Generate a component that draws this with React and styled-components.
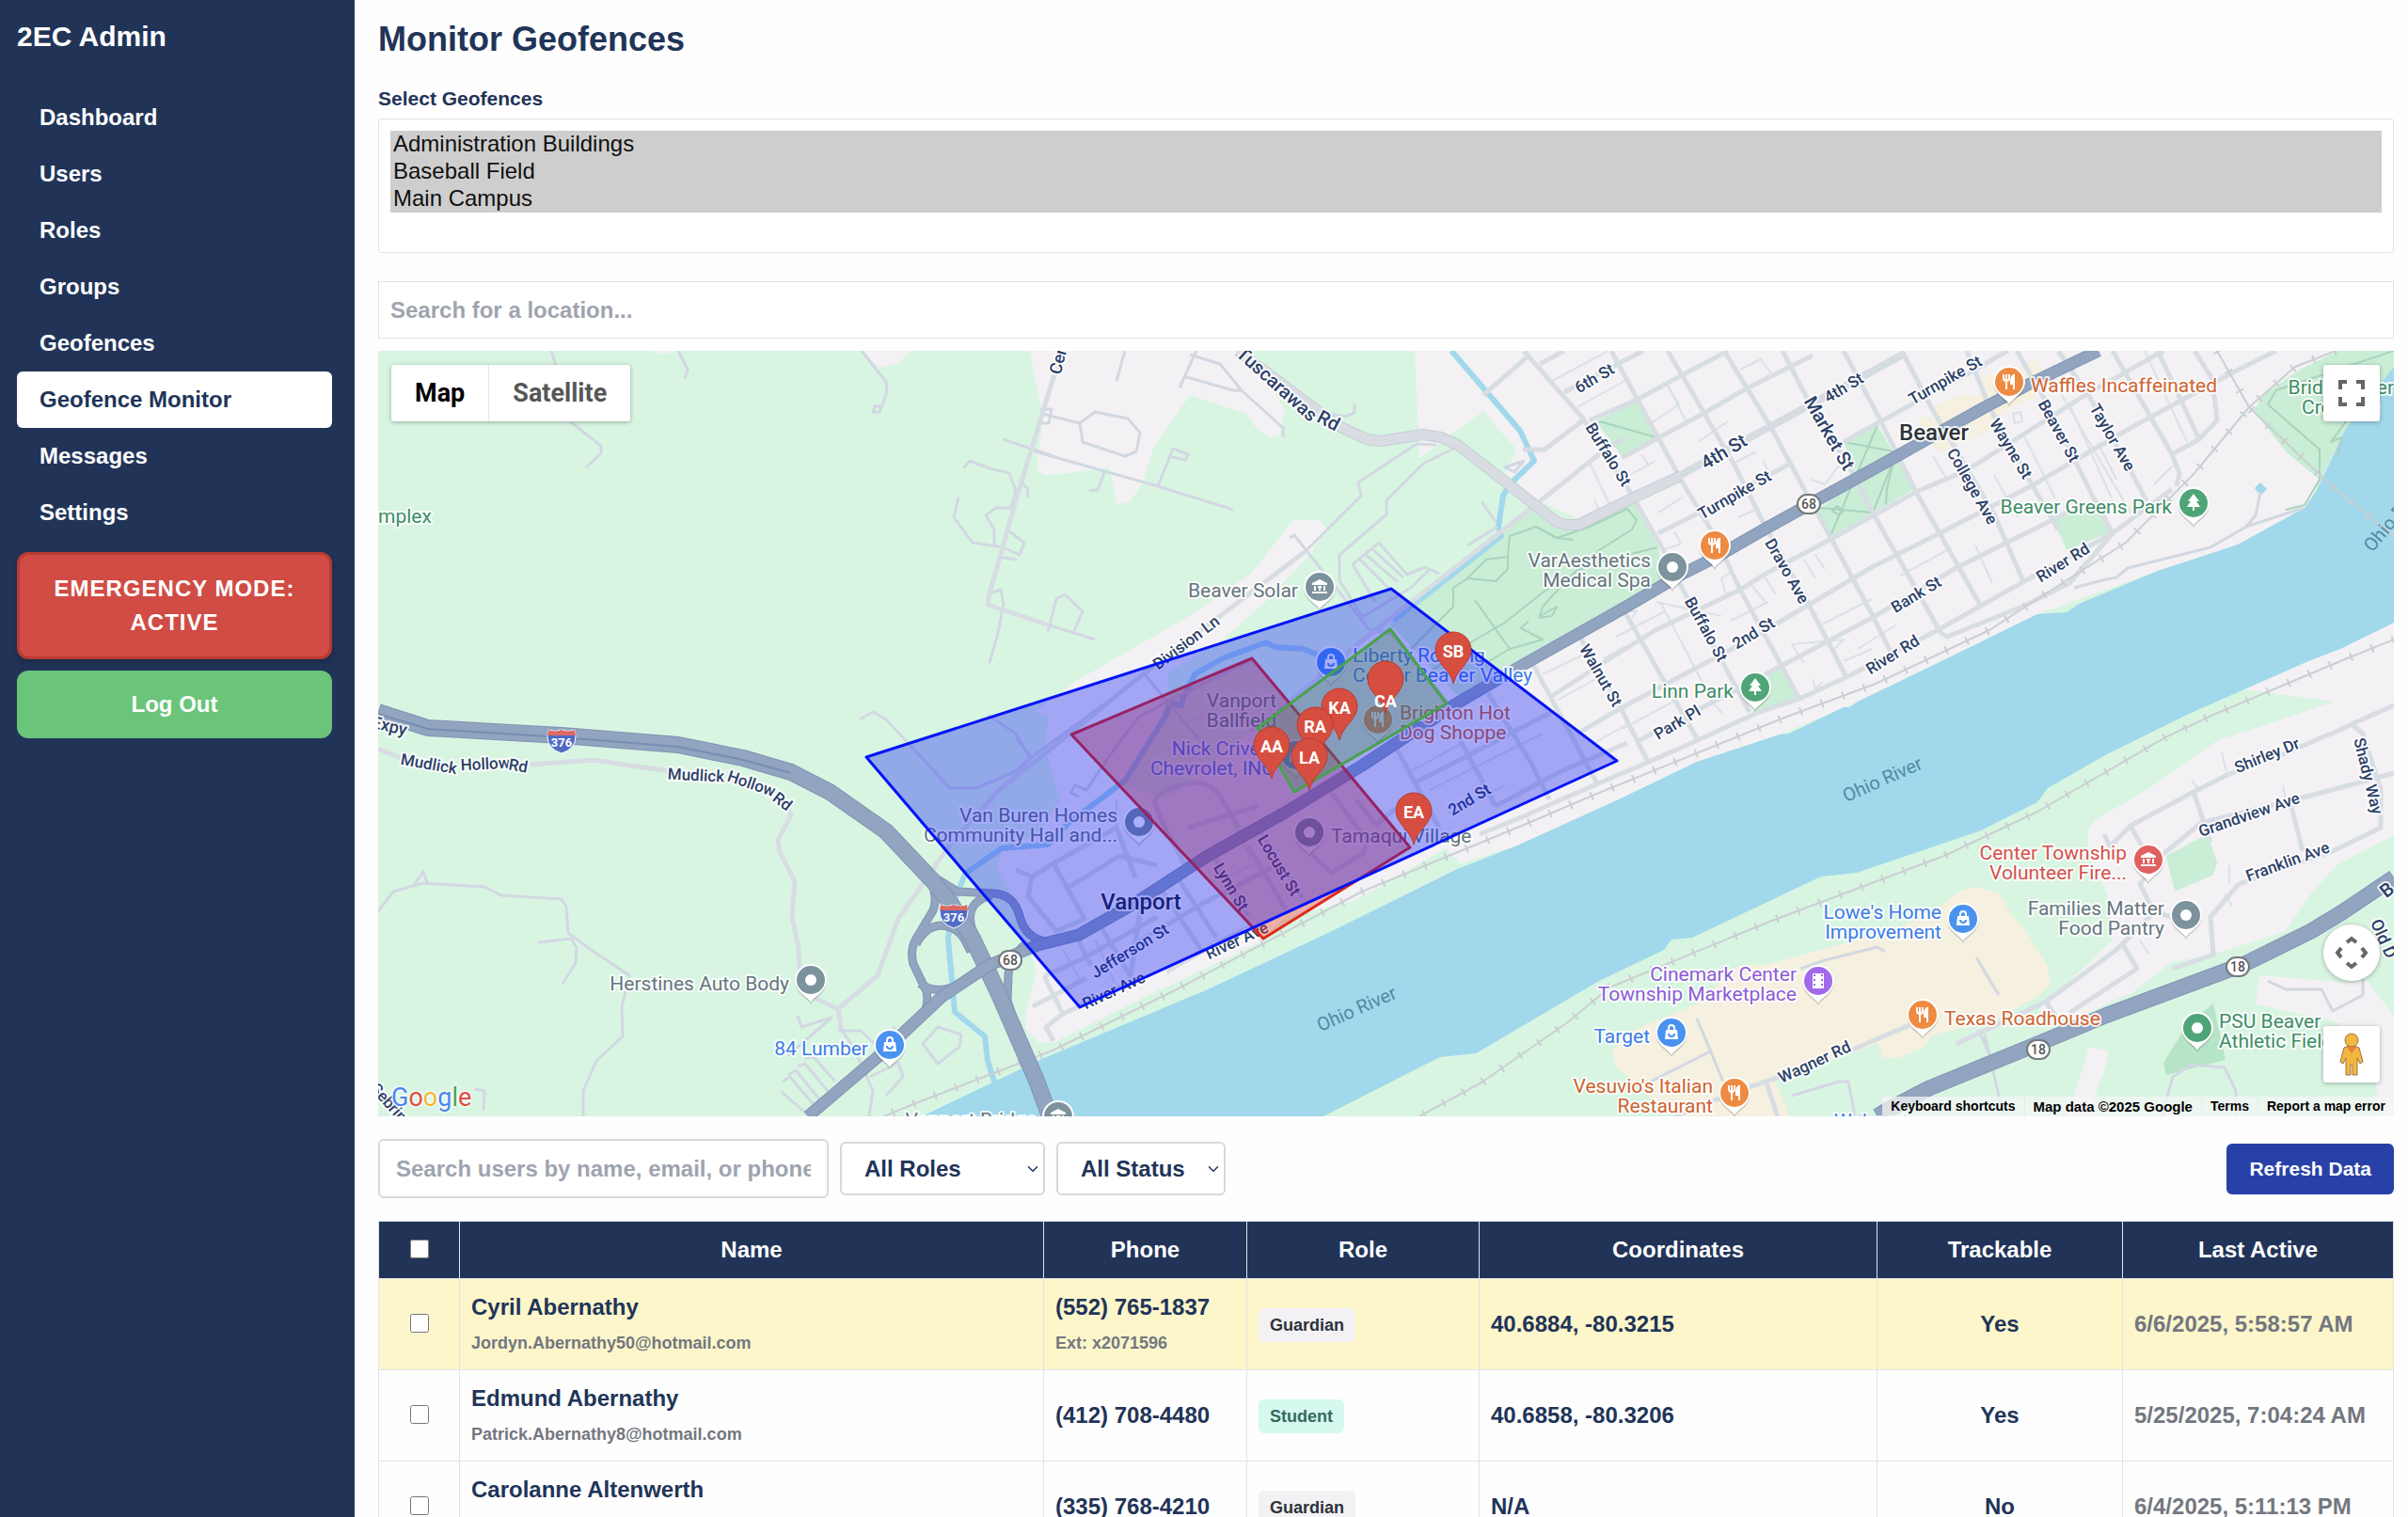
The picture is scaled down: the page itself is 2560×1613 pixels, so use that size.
import React from "react";
import styled, {createGlobalStyle} from "styled-components";
import {ChevronDown} from "lucide-react";

const GlobalStyle = createGlobalStyle`
    *, *::before, *::after {
        box-sizing: border-box;
    }
    body {
        margin: 0;
        background: #fefefe;
        color: #213458;
        font-family: "Liberation Sans", Arial, sans-serif;
        font-size: 24px;
        font-weight: bold;
        line-height: 36px;
    }
    button, input, select {
        font: inherit;
        color: inherit;
    }
`;

/* ---------- page shell ---------- */

const Shell = styled.div`
    display: flex;
    height: 100vh;
    overflow: hidden;
`;

const Sidebar = styled.aside`
    flex: 0 0 377px;
    padding: 18px 24px 18px 18px;
    background: #213458;
    color: #fff;
`;

const Brand = styled.div`
    margin-bottom: 35px;
    font-size: 30px;
    line-height: 42px;
`;

const Nav = styled.nav`
    display: flex;
    flex-direction: column;
    margin-bottom: 12px;
`;

const NavLink = styled.a`
    padding: 12px 24px;
    border-radius: 6px;
    text-decoration: none;
    color: ${(p) => (p.$active ? "#213458" : "#fff")};
    background: ${(p) => (p.$active ? "#fff" : "transparent")};
`;

const EmergencyButton = styled.button`
    display: block;
    width: 100%;
    margin-bottom: 12px;
    padding: 18px;
    border: 3px solid #b83a33;
    border-radius: 12px;
    background: #d04c44;
    box-shadow: 0 4px 8px rgba(0, 0, 0, 0.2);
    letter-spacing: 1px;
    text-transform: uppercase;
    color: #fff;
`;

const LogoutButton = styled.button`
    display: block;
    width: 100%;
    padding: 18px;
    border: none;
    border-radius: 12px;
    background: #6ac47a;
    color: #fff;
`;

const Main = styled.main`
    flex: 1;
    min-width: 0;
    padding: 18px 15px 0 25px;
`;

const Title = styled.h1`
    margin: 0 0 22px;
    font-size: 36px;
    line-height: 48px;
`;

const FieldLabel = styled.label`
    display: block;
    margin-bottom: 5px;
    font-size: 21px;
    line-height: 33px;
`;

const GeofenceList = styled.select`
    display: block;
    width: 100%;
    height: 143px;
    margin-bottom: 30px;
    padding: 12px;
    border: 1px solid #dfe2e6;
    border-radius: 3px;
    background: #fff;
    color: #000;
    font-weight: normal;
    overflow: hidden;
    option {
        min-height: 29px;
        padding: 0 3px 1px;
    }
`;

const LocationInput = styled.input`
    display: block;
    width: 100%;
    height: 61px;
    margin-bottom: 13px;
    padding: 0 12px;
    border: 1px solid #dfe2e6;
    background: #fff;
    &::placeholder {
        color: #9ea4af;
    }
`;

/* ---------- map ---------- */

const MapFrame = styled.section`
    position: relative;
    height: 814px;
    overflow: hidden;
    font-family: Roboto, sans-serif;
    font-weight: normal;
`;

const MapDrawing = styled.svg`
    display: block;
    width: 100%;
    height: 100%;
`;

const MapTypes = styled.div`
    position: absolute;
    top: 15px;
    left: 14px;
    display: flex;
    border-radius: 3px;
    background: #fff;
    box-shadow: 0 1px 5px rgba(0, 0, 0, 0.3);
`;

const MapTypeButton = styled.button`
    height: 60px;
    padding: 0 25px;
    border: none;
    border-left: ${(p) => (p.$active ? "none" : "1px solid #e6e6e6")};
    background: none;
    font-size: 27px;
    font-weight: 700;
    color: ${(p) => (p.$active ? "#000" : "#565656")};
`;

const MapButton = styled.button`
    position: absolute;
    right: 15px;
    top: ${(p) => p.$top};
    bottom: ${(p) => p.$bottom};
    display: grid;
    place-items: center;
    width: 60px;
    height: 60px;
    padding: 0;
    border: none;
    border-radius: ${(p) => (p.$round ? "50%" : "3px")};
    background: #fff;
    box-shadow: 0 1px 5px rgba(0, 0, 0, 0.3);
`;

const GoogleLogo = styled.div`
    position: absolute;
    left: 14px;
    bottom: 3px;
    font-size: 27px;
    font-weight: 400;
    line-height: 34px;
    text-shadow: 0 0 2px #fff, 0 0 3px #fff, 0 0 4px #fff;
`;

const Letter = styled.span`
    color: ${(p) => p.$color};
`;

const Attribution = styled.div`
    position: absolute;
    right: 0;
    bottom: 0;
    display: flex;
    gap: 1px;
    font-family: "Liberation Sans", Arial, sans-serif;
    font-size: 14px;
    font-weight: bold;
    line-height: 21px;
    color: #000;
    > * {
        padding: 0 9px;
        background: rgba(245, 245, 245, 0.75);
        color: inherit;
        text-decoration: none;
    }
`;

const Copyright = styled.span`
    font-size: 15px;
`;

const NAVY = "#2c4068";
const GRAY = "#66757f";
const BLUE = "#3c7ce8";
const GREEN = "#3f8d66";
const ORANGE = "#cf6430";
const RED = "#d6504c";
const PURPLE = "#8e5cd6";

const URBAN = [
    "M1504 373 L1509 487 L1577 437 L1612 478 L1600 503 L1635 532 L1678 552 L1610 600 L1480 668 L1456 672 L1340 770 L1240 850 L1190 835 L1225 790 L1240 745 L1242 715 L1300 680 L1345 640 L1392 590 L1410 562 L1403 553 L1375 553 L1330 610 L1261 657 L1146 723 L1100 757 L1114 762 L1112 800 L1127 850 L1107 883 L1065 905 L1059 921 L1085 970 L1102 1033 L1090 1080 L1091 1095 L1103 1108 L1120 1109 L1223 1057 L1290 1026 L1339 1002 L1366 975 L1440 958 L1537 902 L1553 918 L1613 899 L1723 849 L1804 810 L1892 781 L1977 745 L2166 653 L2294 607 L2380 579 L2450 540 L2545 390 L2545 373Z",
    "M1095 373 L1100 402 L1109 443 L1102 500 L1112 506 L1180 497 L1187 536 L1201 534 L1215 513 L1226 477 L1265 420 L1325 440 L1334 453 L1350 465 L1360 463 L1366 437 L1332 373Z",
    "M914 373 L935 391 L955 386 L969 373Z",
    "M695 373 L702 377 L720 373Z",
    "M2545 662 L2488 690 L2454 703 L2386 733 L2481 746 L2396 775 L2358 787 L2282 840 L2227 872 L2220 883 L2220 910 L2240 950 L2243 977 L2246 1000 L2166 1075 L2205 1085 L2248 1063 L2265 1057 L2309 1023 L2353 1015 L2430 990 L2457 950 L2484 920 L2545 888Z",
    "M2402 1037 L2500 1045 L2517 1043 L2545 1080 L2545 1187 L2530 1187 L2520 1110 L2480 1085 L2398 1068Z",
    "M2221 1113 L2241 1117 L2240 1130 L2227 1166 L2222 1187 L2198 1187Z",
];

const COMMERCIAL = [
    "M2084 947 L2103 943 L2125 950 L2139 973 L2152 987 L2177 1027 L2180 1047 L2166 1060 L2117 1087 L2056 1100 L2043 1115 L2018 1125 L2002 1125 L1996 1110 L1886 1147 L1903 1187 L1785 1187 L1755 1167 L1717 1133 L1714 1117 L1733 1097 L1804 1067 L1848 1027 L1881 1025 L2007 990 L2051 973Z",
    "M2054 433 L2086 420 L2104 420 L2108 400 L2149 390 L2163 382 L2173 397 L2163 423 L2130 437 L2120 453 L2105 463 L2062 480 L2040 457 L2042 443 L2062 448Z",
];

const PARKS = [
    "M1635 533 L1665 556 L1683 554 L1736 533 L1764 583 L1766 617 L1605 707 L1550 740 L1477 663 L1596 570 L1628 540Z",
    "M1960 470 L1996 452 L2035 520 L1945 572 L1933 542 L1976 510Z",
    "M1697 448 L1740 426 L1761 465 L1724 485Z",
    "M2183 553 L2222 540 L2239 547 L2246 565 L2197 585Z",
    "M1873 723 L1894 710 L1911 742 L1863 758Z",
    "M2486 373 L2545 373 L2545 390 L2527 413 L2493 457 L2478 487 L2463 520 L2466 510 L2430 480 L2396 437 L2406 420 L2445 393Z",
    "M2303 910 L2347 887 L2357 917 L2353 930 L2312 948Z",
];

const RIVER = "M980 1187 L1103 1128 L1284 1052 L1416 990 L1547 925 L1613 899 L1723 849 L1804 810 L1892 781 L1902 780 L1960 752 L1966 752 L1977 745 L2060 705 L2166 653 L2197 651 L2210 642 L2294 607 L2379 579 L2450 540 L2462 523 L2479 487 L2493 457 L2527 413 L2545 390 L2545 662 L2488 690 L2454 703 L2386 733 L2325 760 L2238 803 L2177 838 L2166 853 L2106 883 L1974 928 L1936 932 L1799 997 L1777 999 L1769 1010 L1700 1043 L1569 1120 L1531 1124 L1503 1138 L1407 1187Z";

const STREAMS = [
    "M1543 373 L1616 458 L1631 490 L1607 513 L1598 527 L1593 560 L1596 570 L1481 660",
    "M1402 697 L1386 690 L1356 688 L1346 683 L1300 700 L1270 717 L1258 742 L1256 750 L1244 748 L1240 760 L1196 830 L1136 875 L1114 898 L1065 902 L1026 929 L1012 965 L1008 998 L1015 1076 L1047 1102 L1050 1128 L1057 1150",
];

/* thin country roads and driveways */
const LANES = [
    "M586 373 L592 392", "M607 449 L639 474 L639 482 L623 497", "M721 373 L731 393 L728 403",
    "M916 373 L942 406 L943 417 L935 438 L928 438 L930 432 L937 432",
    "M1066 467 L1120 485", "M1024 498 L1031 490 L1052 498 L1073 503 L1080 522 L1075 540 L1059 540 L1048 548 L1057 563 L1057 581",
    "M1019 529 L1014 550 L1034 577 L1066 582 L1084 590 L1089 577 L1073 565", "M1062 592 L1081 595", "M1086 513 L1093 520 L1092 529",
    "M1052 631 L1064 627 L1067 642 L1061 673 L1052 705",
    "M402 969 L418 948 L450 939 L515 943 L533 952 L597 956 L602 964 L604 992 L630 1011 L669 1037 L661 1071 L662 1102 L634 1128 L620 1160 L620 1187",
    "M440 941 L450 927 L454 938", "M572 1002 L607 998 L613 1007 L612 1024 L598 1046", "M505 1158 L515 1160 L514 1180",
    "M914 765 L928 757 L942 765 L1010 838 L1038 838 L1080 820 L1095 806 L1080 780 L1050 760",
    "M893 1092 L905 1110 L919 1139 L928 1160 L924 1187", "M981 1110 L997 1092 L1022 1100 L1020 1113 L997 1131Z",
    "M848 1080 L852 1092 L884 1082 L838 1122", "M891 1096 L915 1096 L930 1110 L952 1092",
    "M832 1150 L840 1145 L868 1178", "M838 1143 L846 1138 L872 1170", "M848 1134 L856 1131 L880 1160", "M856 1126 L864 1123 L888 1150", "M830 1160 L858 1185", "M925 1145 L955 1130 L960 1145 L942 1165",
    "M1148 450 L1164 438 L1199 445 L1212 460 L1208 480 L1196 485 L1151 470Z", "M1108 440 L1148 450", "M1108 435 L1118 435 L1115 450 L1106 450Z",
    "M1100 480 L1231 517 L1311 542", "M1231 517 L1247 477 L1263 483 L1260 489 L1242 485", "M1174 502 L1167 521 L1158 522",
    "M1196 373 L1187 405", "M1272 373 L1254 412", "M1265 377 L1297 387 L1320 415 L1364 455 L1364 465", "M1258 400 L1311 415 L1320 415",
    "M1440 429 L1440 439 L1430 443 L1415 440",
    "M1527 473 L1506 472 L1444 513 L1447 527 L1421 553 L1387 587", "M1545 477 L1513 493 L1474 532 L1474 547 L1424 590 L1424 617 L1449 657",
    "M1371 572 L1376 569 L1387 583 L1456 670", "M1438 600 L1466 577 L1496 611 L1515 603 L1530 610", "M1438 600 L1462 640", "M1445 594 L1476 625", "M1451 589 L1486 619", "M1458 583 L1492 614", "M1450 655 L1500 625 L1520 605",
    "M1560 580 L1592 560", "M1575 533 L1590 555", "M1600 497 L1620 490 L1610 502Z",
    "M1100 660 L1164 680", "M1114 672 L1123 637 L1132 632 L1151 650 L1141 673", "M1080 785 L1097 805",
    "M1080 822 L1097 805 L1217 717", "M1147 847 L1138 843 L1143 835 L1155 840 L1180 803 L1210 763 L1237 748 L1330 702", "M1217 717 L1275 787",
    "M2007 1187 L1972 1187 L1965 1150 L1955 1150 L1905 1165", "M2101 1018 L2125 1058", "M1914 1030 L1940 1021 L1996 1007 L2004 1012",
    "M1804 1083 L1832 1150", "M1755 1150 L1818 1118", "M2103 1095 L2122 1135 L2108 1130 L2062 1150", "M2110 1100 L2130 1187",
    "M2298 1187 L2310 1145 L2330 1132 L2365 1135 L2377 1160 L2377 1187", "M2411 1043 L2430 1052 L2468 1052 L2480 1075 L2512 1058 L2512 1040",
    "M2403 523 L2398 548 L2388 560 L2350 582 L2262 604 L2250 614 L2235 617 L2205 625", "M2449 540 L2388 560",
];

/* residential streets of the Beaver and Vanport grids */
const STREETS = [
    "M402 796 L428 807 M563 813 L630 808 L712 820 M836 856 L841 867 L827 893 L829 906 L845 937 L842 974 L849 1008 L850 1029 L864 1060 L891 1073 L933 1037 L955 977 L992 924 L1010 898 L1061 841 L1120 794 L1215 717 L1387 587",
    "M1134 373 L1120 401 L1080 532 L1052 631 L1050 643 L1116 665",
    "M891 1073 L894 1092", "M1628 540 L1458 673 L1361 755 L1330 777", "M1637 533 L1700 483 L1727 465",
    "M1619 478 L1642 478 L1683 447", "M1577 420 L1623 380", "M1637 387 L1663 373", "M1456 670 L1480 673 L1540 750",
    "M1660 850 L1753 810 L1805 787 L1868 758 L1913 743 L1963 720 L2060 670 L2154 617 L2246 567 L2309 520",
    "M1677 780 L1723 753 L1860 680 L1923 643 L1990 603 L2062 567 L2159 517 L2265 455 L2370 398 L2420 373",
    "M1650 740 L1707 703 L1760 670 L1850 627 L1877 610 L1947 573 L2037 523 L2091 500 L2217 420 L2300 373",
    "M1743 787 L1843 735 L1990 657 L2081 603 L2178 555 L2215 535",
    "M1763 567 L1803 547 L1903 493 M1960 470 L1996 450 L2105 390 L2134 373",
    "M1724 487 L1810 440 L1857 413 L1927 378", "M1663 417 L1720 387 L1747 373", "M1690 447 L1740 425 L1790 398 L1837 373",
    "M1713 373 L1742 427 L1787 510 L1823 570 L1850 627 L1913 743",
    "M1620 373 L1683 445 L1733 523 L1777 600 L1787 623 L1860 757",
    "M1680 678 L1723 753 L1752 810", "M1727 650 L1805 787", "M1630 707 L1698 833", "M1582 737 L1627 810 L1647 850",
    "M1833 373 L1882 453 L1918 520 L1947 573 L1990 653 L2010 693", "M1773 373 L1843 493 L1877 560 L1923 643 L1963 720",
    "M1895 373 L1923 427 L1970 503 L1992 547 L2060 667", "M1960 373 L1997 443 L2037 523 L2062 567 L2105 643",
    "M2022 373 L2053 433 L2120 547 L2151 618", "M2091 373 L2115 433 L2159 513 L2188 563", "M2144 373 L2173 423 L2226 530 L2246 567",
    "M2188 373 L2222 423 L2265 500 L2282 533", "M2246 373 L2309 483 L2317 503 L2314 517", "M2294 373 L2338 467", "M2333 373 L2352 403 L2357 447 L2338 467 L2309 483",
    "M2062 672 L2070 677 L2150 645 L2200 620 L2246 567",
    "M1573 887 L1620 868 L1660 850", "M1503 833 L1600 783 L1650 757", "M1483 793 L1530 880", "M1547 777 L1590 857", "M1590 857 L1660 820 L1730 790",
    "M1227 853 Q1232 838 1270 832 Q1288 832 1297 847 L1317 880", "M1227 853 L1240 883 L1260 920", "M1263 880 L1337 857",
    "M1080 925 L1097 932 L1120 918 L1187 880 L1207 933", "M1097 932 L1093 953 L1123 990 L1153 977 L1120 918", "M1137 943 L1190 910 L1230 920",
    "M1167 980 L1203 1040", "M1143 993 L1160 1027", "M1213 963 L1202 1037", "M1233 943 L1277 1010", "M1250 930 L1293 997", "M1290 910 L1327 973", "M1327 900 L1367 967", "M1337 880 L1385 955",
    "M1207 1003 L1280 960 L1357 920", "M1240 1033 L1293 1003 L1330 985", "M1110 1038 L1150 1020 L1230 975", "M1110 1038 L1130 1078 L1200 1045", "M1098 1070 L1123 1057 L1155 1040", "M1120 1107 L1112 1092 L1130 1078",
    "M1393 907 L1415 928 L1450 907 L1453 893 L1413 840", "M1442 850 L1463 877 L1483 860",
    "M2545 750 L2500 770 L2490 775 L2420 805 L2370 823 L2332 842 L2265 878 L2283 910", "M2500 770 L2512 780 L2531 840 L2531 880 L2480 905 L2380 940 L2350 975 L2353 1015 L2310 1030",
    "M2545 822 L2460 845 L2340 875 L2300 908 L2275 940 L2290 970 L2310 975", "M2332 842 L2350 895", "M2434 850 L2448 905", "M2290 970 L2250 1010 L2175 1065 L2080 1110",
    "M2256 1003 L2272 1030 L2200 1077", "M2175 1065 L2185 1080", "M2030 1090 L1960 1120 M1905 1140 L1843 1162 L1780 1187", "M1878 1152 L1890 1187", "M2237 887 L2243 900 L2265 878",
];

const ALLEYS = [
    "M1650 405 L1710 373", "M1677 433 L1727 405", "M1755 450 L1785 430 L1772 408", "M1772 408 L1792 447", "M1850 393 L1872 382 L1883 397", "M1805 470 L1837 448",
    "M1745 483 L1753 495", "M1690 492 L1712 538", "M1695 532 L1700 542", "M1733 505 L1760 490", "M1763 545 L1790 528", "M1780 565 L1787 578 L1767 585", "M1843 493 L1867 480",
    "M1875 490 L1880 503", "M1848 550 L1865 543", "M1830 615 L1835 632 L1845 628", "M1830 615 L1840 608", "M1918 595 L1930 615", "M1930 590 L1940 605", "M1860 620 L1877 640", "M1875 612 L1888 632",
    "M1840 660 L1880 640", "M1760 640 L1830 655", "M1765 640 L1820 745", "M1718 677 L1770 650", "M1705 700 L1727 688", "M1640 717 L1690 693", "M1655 745 L1700 720", "M1695 790 L1730 770", "M1725 775 L1790 740", "M1820 745 L1832 760",
    "M1935 665 L1990 637", "M1950 690 L1960 680 L1905 685 L1918 705", "M1975 690 L2015 665", "M1960 703 L1990 690", "M1927 722 L1930 732 L1938 725", "M1925 510 L1940 515 L1955 495",
    "M2020 612 L2070 585", "M2100 580 L2118 620", "M2120 505 L2145 550", "M2150 460 L2185 530", "M2200 430 L2245 530", "M2180 400 L2265 545",
    "M2230 470 L2250 510", "M2290 515 L2310 495", "M2055 485 L2070 510", "M2120 380 L2135 373", "M2280 373 L2325 470",
    "M2140 440 L2148 438 L2150 448 L2142 450Z", "M1727 650 L1740 650 L1735 657",
    "M2362 800 L2367 820", "M2330 830 L2340 842", "M2427 835 L2430 850", "M2365 950 L2373 963", "M2370 940 L2370 920", "M2275 1000 L2285 1015",
    "M1520 840 L1640 780", "M1540 865 L1600 835", "M1500 820 L1555 790", "M1130 1010 L1150 1045", "M1165 1000 L1185 1045", "M1310 870 L1330 915", "M1300 935 L1340 915", "M1390 845 L1420 830", "M1187 850 L1187 880", "M1260 770 L1290 755",
];

const PARK_PATHS = [
    "M1560 615 L1580 595 L1603 592 L1605 570 L1633 560 L1655 572 L1690 560 L1730 541 L1740 553 L1735 563 L1700 585 L1672 610 L1640 645 L1637 655 L1655 645 L1650 655 L1636 657",
    "M1500 690 L1530 660 L1545 645 L1545 625 L1560 615 L1590 618 L1603 605 L1603 592", "M1568 638 L1605 690 L1640 680 L1617 668 L1625 660", "M1633 560 L1655 572 L1672 574", "M1520 715 L1560 685 L1600 662 L1640 630 L1690 600 L1762 582", "M1580 705 L1605 690",
    "M1700 448 L1761 465", "M1960 470 L2013 480", "M1996 452 L1945 572", "M2013 490 L2006 520 L2005 537", "M1991 545 L1935 540", "M2013 490 L1991 545", "M1948 543 L1953 538 L1960 543 L1955 548Z",
    "M2545 373 L2420 415 L2411 430 L2466 478 L2466 510 L2450 537 L2430 542", "M2485 485 L2490 465 L2478 470 L2500 440",
];

const RAILS = [
    "M2357 373 L2391 433 L2479 517 L2545 570",
    "M2483 373 L2440 390 L2391 433 L2333 503 L2260 577 L2197 617 L2115 670 L1994 727 L1897 763 L1700 843 L1613 880 L1448 948 L1251 1052 L1119 1117 L971 1174 L940 1187",
    "M2545 680 L2488 703 L2353 760 L2304 783 L2166 863 L2067 910 L1881 980 L1711 1050 L1668 1086 L1575 1151 L1509 1187",
];

const TUSCARAWAS = "M1316 373 L1421 452 L1453 467 L1467 469 L1513 462 L1532 465 L1550 473 L1655 555 L1665 558 L1678 558 L1735 530 L1787 506";

const RAMPS = [
    "M990 938 Q997 955 992 968 L974 998 Q967 1010 971 1025 L985 1054 Q987 1064 984 1074",
    "M974 1004 Q984 985 1000 984 Q1018 985 1026 1000 L1032 1012",
    "M978 1046 Q990 1054 1004 1052 L1022 1048",
    "M997 935 L1018 948 L1058 950 Q1078 952 1084 974 Q1090 998 1112 1001",
    "M1054 952 Q1036 956 1032 970 Q1029 984 1040 1000",
    "M1090 1004 Q1074 1018 1072 1036 L1071 1064 L1080 1092",
];

const HIGHWAYS = [
    {d: "M402 757 L455 774 L597 782 L721 792 L790 806 L841 821 L882 842 L942 884 L992 937 L1011 961 L1034 998 L1061 1055 L1102 1149 L1116 1187", w: 18},
    {d: "M859 1187 L933 1124 L1001 1060 L1052 1026 L1103 1005 L1147 994 L1207 960 L1284 910 L1366 864 L1448 814 L1547 749 L1610 712 L1729 645 L1787 611 L1823 593 L1877 562 L2013 487 L2110 433 L2154 410 L2231 373", w: 13},
    {d: "M2545 933 L2490 970 L2457 990 L2386 1025 L2238 1080 L2166 1110 L2051 1157 L2007 1180 L1996 1187", w: 17},
];

const ROAD_LABELS = [
    {t: "6th St", x: 1695, y: 402, r: -30}, {t: "Buffalo St", x: 1710, y: 483, r: 58}, {t: "4th St", x: 1833, y: 481, r: -31, s: 20},
    {t: "4th St", x: 1960, y: 412, r: -31}, {t: "Turnpike St", x: 1844, y: 526, r: -30}, {t: "Turnpike St", x: 2068, y: 404, r: -30},
    {t: "Market St", x: 1944, y: 461, r: 60, s: 20}, {t: "College Ave", x: 2097, y: 517, r: 60}, {t: "Wayne St", x: 2138, y: 477, r: 59},
    {t: "Beaver St", x: 2189, y: 458, r: 61}, {t: "Taylor Ave", x: 2246, y: 465, r: 60}, {t: "Dravo Ave", x: 1900, y: 607, r: 60},
    {t: "Buffalo St", x: 1814, y: 669, r: 61}, {t: "Bank St", x: 2037, y: 632, r: -31}, {t: "2nd St", x: 1864, y: 673, r: -31},
    {t: "River Rd", x: 2193, y: 598, r: -32}, {t: "River Rd", x: 2012, y: 696, r: -32}, {t: "Walnut St", x: 1702, y: 718, r: 60},
    {t: "Park Pl", x: 1783, y: 768, r: -31}, {t: "Division Ln", x: 1261, y: 683, r: -37}, {t: "Jefferson St", x: 1201, y: 1011, r: -32},
    {t: "River Ave", x: 1184, y: 1053, r: -25}, {t: "River Ave", x: 1315, y: 1000, r: -25}, {t: "Lynn St", x: 1309, y: 943, r: 59},
    {t: "Locust St", x: 1360, y: 920, r: 59}, {t: "2nd St", x: 1562, y: 850, r: -31}, {t: "Shirley Dr", x: 2410, y: 803, r: -22},
    {t: "Grandview Ave", x: 2391, y: 866, r: -19}, {t: "Franklin Ave", x: 2432, y: 916, r: -20}, {t: "Shady Way", x: 2518, y: 825, r: 76},
    {t: "Wagner Rd", x: 1929, y: 1129, r: -25}, {t: "Cer", x: 1125, y: 384, r: -76, s: 18}, {t: "Expy", x: 414, y: 772, r: 13, s: 18},
    {t: "Old D", x: 2534, y: 998, r: 66, s: 18}, {t: "B", x: 2538, y: 947, r: -38, s: 20}, {t: "Sebring", x: 417, y: 1176, r: 48},
    {t: "Mudlick", x: 456, y: 812, r: 10}, {t: "Hollow", x: 516, y: 812, r: -3}, {t: "Rd", x: 551, y: 814, r: 10},
    {t: "Mudlick", x: 740, y: 824, r: 3}, {t: "Hollow", x: 799, y: 833, r: 19}, {t: "Rd", x: 832, y: 852, r: 38},
    {t: "Tuscarawas", x: 1357, y: 409, r: 42, s: 20}, {t: "Rd", x: 1412, y: 448, r: 28, s: 20},
];

const PLACES = [
    {lines: ["Herstines Auto Body"], x: 862, y: 1042, icon: "dot", fill: "#7c929c", color: GRAY, side: "left"},
    {lines: ["84 Lumber"], x: 946, y: 1111, icon: "bag", fill: "#4a92f0", color: BLUE, side: "left"},
    {lines: ["Beaver Solar"], x: 1403, y: 624, icon: "bank", fill: "#7c929c", color: GRAY, side: "left"},
    {lines: ["Liberty Roofing", "Center Beaver Valley"], x: 1415, y: 704, icon: "bag", fill: "#4a92f0", color: BLUE, side: "right"},
    {lines: ["VarAesthetics", "Medical Spa"], x: 1778, y: 603, icon: "dot", fill: "#7c929c", color: GRAY, side: "left"},
    {lines: [], x: 1823, y: 580, icon: "food", fill: "#ee8b42", color: ORANGE, side: "left"},
    {lines: ["Waffles Incaffeinated"], x: 2136, y: 406, icon: "food", fill: "#ee8b42", color: ORANGE, side: "right"},
    {lines: ["Beaver Greens Park"], x: 2332, y: 535, icon: "tree", fill: "#4fa577", color: GREEN, side: "left"},
    {lines: ["Linn Park"], x: 1866, y: 731, icon: "tree", fill: "#4fa577", color: GREEN, side: "left"},
    {lines: ["Brighton Hot", "Dog Shoppe"], x: 1465, y: 765, icon: "food", fill: "#ee8b42", color: ORANGE, side: "right"},
    {lines: ["Nick Crivelli", "Chevrolet, INC"], x: 1378, y: 803, icon: "bag", fill: "#4a92f0", color: BLUE, side: "left"},
    {lines: ["Van Buren Homes", "Community Hall and..."], x: 1211, y: 874, icon: "dot", fill: "#7c929c", color: GRAY, side: "left"},
    {lines: ["Tamaqui Village"], x: 1392, y: 885, icon: "dot", fill: "#7c929c", color: GRAY, side: "right"},
    {lines: ["Center Township", "Volunteer Fire..."], x: 2284, y: 914, icon: "bank", fill: "#e06060", color: RED, side: "left"},
    {lines: ["Families Matter", "Food Pantry"], x: 2324, y: 973, icon: "dot", fill: "#7c929c", color: GRAY, side: "left"},
    {lines: ["Lowe's Home", "Improvement"], x: 2087, y: 977, icon: "bag", fill: "#4a92f0", color: BLUE, side: "left"},
    {lines: ["Cinemark Center", "Township Marketplace"], x: 1933, y: 1043, icon: "film", fill: "#a06ae8", color: PURPLE, side: "left"},
    {lines: ["Target"], x: 1777, y: 1098, icon: "bag", fill: "#4a92f0", color: BLUE, side: "left"},
    {lines: ["Vesuvio's Italian", "Restaurant"], x: 1844, y: 1162, icon: "food", fill: "#ee8b42", color: ORANGE, side: "left"},
    {lines: ["Texas Roadhouse"], x: 2044, y: 1079, icon: "food", fill: "#ee8b42", color: ORANGE, side: "right"},
    {lines: ["PSU Beaver", "Athletic Field"], x: 2336, y: 1093, icon: "dot", fill: "#4fa577", color: GREEN, side: "right"},
    {lines: ["Vanport Bridge"], x: 1125, y: 1187, icon: "bank", fill: "#7c929c", color: GRAY, side: "left"},
];

const USER_PINS = [
    {t: "CA", x: 1473, y: 758, low: true}, {t: "SB", x: 1545, y: 727}, {t: "KA", x: 1424, y: 787}, {t: "RA", x: 1398, y: 807},
    {t: "AA", x: 1352, y: 828}, {t: "LA", x: 1392, y: 840}, {t: "EA", x: 1503, y: 898},
];

const MapText = styled.text`
    font-family: Roboto, sans-serif;
    font-size: ${(p) => p.$size || 21}px;
    font-weight: ${(p) => p.$weight || 400};
    fill: ${(p) => p.$color};
    stroke: ${(p) => (p.$plain ? "none" : "rgba(255, 255, 255, 0.85)")};
    stroke-width: 4px;
    stroke-linejoin: round;
    paint-order: stroke;
    text-anchor: ${(p) => p.$anchor || "middle"};
`;

const Lines = ({paths, color, width, dash}) => (
    <g fill="none" stroke={color} strokeWidth={width} strokeDasharray={dash} strokeLinejoin="round">
        {paths.map((d) => <path key={d} d={d}/>)}
    </g>
)

const Areas = ({paths, color}) => (
    <g fill={color}>
        {paths.map((d) => <path key={d} d={d}/>)}
    </g>
)

const Glyph = ({icon, fill}) => {
    switch (icon) {
        case "bag":
            return (
                <g>
                    <path d="M-6 -3 H6 L7 7 H-7Z" fill="#fff"/>
                    <path d="M-3 -3 V-5 A3 3 0 0 1 3 -5 V-3" fill="none" stroke="#fff" strokeWidth="2"/>
                    <path d="M-3 1 A3 3 0 0 0 3 1" fill="none" stroke={fill} strokeWidth="2"/>
                </g>
            )
        case "bank":
            return (
                <g fill="#fff">
                    <path d="M0 -8 L8 -4 V-2 H-8 V-4Z"/>
                    <path d="M-6 -1 H-4 V4 H-6Z M-2 -1 H2 V1 H1 V4 H-1 V1 H-2Z M4 -1 H6 V4 H4Z M-8 5 H8 V7 H-8Z"/>
                </g>
            )
        case "food":
            return (
                <g fill="none" stroke="#fff" strokeWidth="2">
                    <path d="M-6 -8 V-4 A3 3 0 0 0 0 -4 V-8 M-3 -8 V8"/>
                    <path d="M5 8 V-7 Q2 -6 2 0 V2 H5" fill="#fff"/>
                </g>
            )
        case "tree":
            return <path d="M0 -10 L6 -2 H3 L7 4 H1 V8 H-1 V4 H-7 L-3 -2 H-6Z" fill="#fff"/>
        case "film":
            return (
                <g>
                    <path d="M-6 -8 H6 V8 H-6Z" fill="#fff"/>
                    <path d="M-4 -7 V8 M4 -7 V8" stroke={fill} strokeWidth="2" strokeDasharray="2 3"/>
                </g>
            )
        default:
            return <circle r="6" fill="#fff"/>
    }
}

const Place = ({lines, x, y, icon, fill, color, side}) => (
    <g>
        <g transform={`translate(${x} ${y})`}>
            <path d="M0 25 C-2 19 -17 14 -17 0 A17 17 0 0 1 17 0 C17 14 2 19 0 25Z" fill="rgba(0,0,0,.18)" transform="translate(0 1)"/>
            <path d="M0 24 C-2 18 -17 13 -17 0 A17 17 0 0 1 17 0 C17 13 2 18 0 24Z" fill="#fff"/>
            <circle r="15" fill={fill}/>
            <Glyph icon={icon} fill={fill}/>
        </g>
        {lines.map((line, i) => (
            <MapText
                key={line}
                x={side === "left" ? x - 23 : x + 23}
                y={lines.length === 1 ? y + 11 : y + i * 21}
                $color={color}
                $anchor={side === "left" ? "end" : "start"}
            >
                {line}
            </MapText>
        ))}
    </g>
)

const Interstate = ({x, y}) => (
    <g transform={`translate(${x} ${y})`}>
        <path d="M-14 -12 Q-7 -9 0 -12 Q7 -9 14 -12 L15 -5 Q15 8 0 13 Q-15 8 -15 -5Z" fill="#4e6bc6" stroke="#fff" strokeWidth="1"/>
        <path d="M-14 -12 Q-7 -9 0 -12 Q7 -9 14 -12 L15 -6 H-15Z" fill="#dc6a63"/>
        <MapText y="6" $size={13} $weight={700} $color="#fff" $plain>376</MapText>
    </g>
)

const RouteShield = ({x, y, children}) => (
    <g transform={`translate(${x} ${y})`}>
        <rect x="-12" y="-10" width="24" height="20" rx="10" fill="#fff" stroke="#74797d" strokeWidth="2"/>
        <MapText y="5" $size={14} $weight={500} $color="#555" $plain>{children}</MapText>
    </g>
)

const UserPin = ({t, x, y, low}) => (
    <g transform={`translate(${x} ${y})`}>
        <path d="M0 0 C-3 -15 -19 -22 -19 -36 A19 19 0 0 1 19 -36 C19 -22 3 -15 0 0Z" fill="#d64e3f" stroke="#b93b2f" strokeWidth="1"/>
        <MapText y={low ? -6 : -28} $size={18} $weight={700} $color="#fff" $plain>{t}</MapText>
    </g>
)

const GeofenceMap = () => (
    <MapDrawing viewBox="402 373 2143 814" preserveAspectRatio="xMidYMid slice" role="img" aria-label="Geofence map">
        <rect x="402" y="373" width="2143" height="814" fill="#d8f5e2"/>
        <Areas paths={URBAN} color="#f3f1f3"/>
        <Areas paths={COMMERCIAL} color="#f5f0df"/>
        <Areas paths={PARKS} color="#c9edd5"/>
        <path d="M2353 1067 L2366 1127 L2303 1143 L2300 1130 L2325 1090Z" fill="#b6e4c7"/>
        <path d={RIVER} fill="#a1d8ec"/>
        <path d="M2403 513 L2410 520 L2403 527 L2397 519Z" fill="#a1d8ec"/>
        <Lines paths={STREAMS} color="#a1d8ec" width="6"/>
        <Lines paths={PARK_PATHS} color="#a9d3bd" width="2"/>
        <Lines paths={ALLEYS} color="#dbe1e6" width="2"/>
        <Lines paths={LANES} color="#d2d8e2" width="3"/>
        <Lines paths={STREETS} color="#d7dde3" width="5"/>
        <Lines paths={RAILS} color="#cbcfd3" width="2"/>
        <Lines paths={RAILS} color="#cbcfd3" width="9" dash="2 22"/>
        <path d="M1783 507 L1857 467 L1920 433 L2023 377" fill="none" stroke="#d5dce1" strokeWidth="8"/>
        <path d={TUSCARAWAS} fill="none" stroke="#c6cdd6" strokeWidth="12" strokeLinejoin="round"/>
        <path d={TUSCARAWAS} fill="none" stroke="#d9dde3" strokeWidth="10" strokeLinejoin="round"/>
        <Lines paths={RAMPS} color="#8094b4" width="9"/>
        <Lines paths={RAMPS} color="#91a4c0" width="7"/>
        {HIGHWAYS.map(({d, w}) => (
            <g key={d} fill="none" strokeLinejoin="round">
                <path d={d} stroke="#8094b4" strokeWidth={w}/>
                <path d={d} stroke="#91a4c0" strokeWidth={w - 2}/>
            </g>
        ))}
        <path d="M402 759 L455 775 L597 784 L721 794 L790 808 L841 822" fill="none" stroke="#768eb2" strokeWidth="2"/>

        {ROAD_LABELS.map(({t, x, y, r, s}) => (
            <g key={`${t}${x}`} transform={`translate(${x} ${y}) rotate(${r})`}>
                <MapText y="6" $size={s || 17} $weight={500} $color={NAVY}>{t}</MapText>
            </g>
        ))}
        <MapText $size={20} $color="#4f8ba3" $plain transform="translate(2004 835) rotate(-24)">Ohio River</MapText>
        <MapText $size={20} $color="#4f8ba3" $plain transform="translate(1445 1079) rotate(-24)">Ohio River</MapText>
        <MapText $size={20} $color="#4f8ba3" $plain $anchor="start" transform="translate(2522 588) rotate(-50)">Ohio River</MapText>

        <Interstate x={597} y={788}/>
        <Interstate x={1014} y={974}/>
        <RouteShield x={1074} y={1021}>68</RouteShield>
        <RouteShield x={1923} y={536}>68</RouteShield>
        <RouteShield x={2379} y={1028}>18</RouteShield>
        <RouteShield x={2167} y={1116}>18</RouteShield>

        {PLACES.map((place) => <Place key={`${place.x}-${place.y}`} {...place}/>)}
        <MapText x="402" y="556" $color={GREEN} $anchor="start">mplex</MapText>
        <MapText x="2545" y="419" $color={GREEN} $anchor="end">Bridgewater</MapText>
        <MapText x="2447" y="440" $color={GREEN} $anchor="start">Crossing</MapText>
        <MapText x="1357" y="752" $color={GREEN} $anchor="end">Vanport</MapText>
        <MapText x="1357" y="773" $color={GREEN} $anchor="end">Ballfield</MapText>
        <MapText x="1950" y="1199" $color={BLUE} $anchor="start">Walmart</MapText>
        <MapText x="1213" y="967" $size={24} $weight={500} $color="#202838">Vanport</MapText>
        <MapText x="2056" y="468" $size={24} $weight={500} $color="#2e3338">Beaver</MapText>

        <g strokeWidth="3" strokeLinejoin="round">
            <path d="M1139 781 L1331 700 L1499 901 L1343 998Z" fill="rgba(234,51,35,.36)" stroke="#e02a1a"/>
            <path d="M921 805 L1479 626 L1719 809 L1148 1071Z" fill="rgba(8,20,245,.34)" stroke="#0314f5"/>
            <path d="M1478 669 L1538 748 L1376 842 L1337 774Z" fill="rgba(76,140,80,.34)" stroke="#47a24d"/>
        </g>
        {USER_PINS.map((pin) => <UserPin key={pin.t} {...pin}/>)}
    </MapDrawing>
)

const FullscreenIcon = () => (
    <svg width="30" height="30" viewBox="0 0 30 30" fill="none" stroke="#666" strokeWidth="4">
        <path d="M3 11 V3 H10 M20 3 H27 V11 M27 19 V27 H20 M10 27 H3 V19"/>
    </svg>
)

const PanIcon = () => (
    <svg width="36" height="36" viewBox="0 0 36 36" fill="none" stroke="#666" strokeWidth="4">
        <path d="M13 7 L18 3 L23 7 M13 29 L18 33 L23 29 M7 13 L3 18 L7 23 M29 13 L33 18 L29 23"/>
    </svg>
)

const PegmanIcon = () => (
    <svg width="28" height="46" viewBox="0 0 28 46" fill="#f2b73f" stroke="#9b7544" strokeWidth="1">
        <path d="M6 16 Q14 12 22 16 L26 31 L23 33 L20 27 V45 H15 V34 H13 V45 H8 V27 L5 33 L2 31Z"/>
        <circle cx="14" cy="8" r="7"/>
        <path d="M9 15 H19 L14 22Z" fill="#ea7f3d" stroke="none"/>
    </svg>
)

/* ---------- user table ---------- */

const Toolbar = styled.div`
    display: flex;
    align-items: center;
    gap: 12px;
    margin: 24px 0;
`;

const UserSearch = styled.input`
    width: 479px;
    height: 63px;
    padding: 0 17px;
    border: 2px solid #d5d9de;
    border-radius: 6px;
    background: #fff;
    &::placeholder {
        color: #9ea4af;
    }
`;

const Picker = styled.div`
    display: grid;
    align-items: center;
    width: ${(p) => p.$width}px;
    > * {
        grid-area: 1 / 1;
    }
    svg {
        justify-self: end;
        margin-right: 4px;
        pointer-events: none;
    }
`;

const PickerSelect = styled.select`
    width: 100%;
    height: 57px;
    padding: 0 24px;
    border: 2px solid #d5d9de;
    border-radius: 6px;
    background: #fff;
    appearance: none;
`;

const RefreshButton = styled.button`
    margin-left: auto;
    padding: 12px 24px;
    border: none;
    border-radius: 6px;
    background: #2841a8;
    font-size: 21px;
    line-height: 30px;
    color: #fff;
`;

const Table = styled.table`
    width: 100%;
    border-collapse: collapse;
    table-layout: fixed;
    background: #fefefe;
    th, td {
        padding: 12px;
        border: 1px solid #e0e3e8;
    }
    th {
        background: #213458;
        color: #fff;
    }
`;

const Col = styled.col`
    width: ${(p) => p.$width};
`;

const Row = styled.tr`
    background: ${(p) => (p.$alert ? "#fcf6ca" : "transparent")};
`;

const Cell = styled.td`
    text-align: ${(p) => (p.$center ? "center" : "left")};
    color: ${(p) => (p.$muted ? "#737780" : "inherit")};
`;

const CheckCell = styled(Cell)`
    line-height: 0;
`;

const Checkbox = styled.input`
    width: 20px;
    height: 20px;
    margin: 0 0 2px;
`;

const Person = styled.div`
    min-height: 72px;
`;

const Detail = styled.span`
    font-size: 18px;
    line-height: 27px;
    color: #737780;
`;

const Badge = styled.span`
    display: inline-block;
    padding: 4px 12px;
    border-radius: 6px;
    background: ${(p) => (p.$role === "Student" ? "#d5f8ef" : "#f3f1f3")};
    font-size: 18px;
    line-height: 28px;
    vertical-align: middle;
    color: ${(p) => (p.$role === "Student" ? "#366b5c" : "#2c323c")};
`;

const LINKS = ["Dashboard", "Users", "Roles", "Groups", "Geofences", "Geofence Monitor", "Messages", "Settings"];

const FENCES = ["Administration Buildings", "Baseball Field", "Main Campus"];

const USERS = [
    {name: "Cyril Abernathy", email: "Jordyn.Abernathy50@hotmail.com", phone: "(552) 765-1837", ext: "x2071596", role: "Guardian", coords: "40.6884, -80.3215", trackable: "Yes", active: "6/6/2025, 5:58:57 AM", alert: true},
    {name: "Edmund Abernathy", email: "Patrick.Abernathy8@hotmail.com", phone: "(412) 708-4480", role: "Student", coords: "40.6858, -80.3206", trackable: "Yes", active: "5/25/2025, 7:04:24 AM"},
    {name: "Carolanne Altenwerth", phone: "(335) 768-4210", role: "Guardian", coords: "N/A", trackable: "No", active: "6/4/2025, 5:11:13 PM"},
];

const App = () => {

    return (
        <Shell>
            <GlobalStyle/>
            <Sidebar>
                <Brand>2EC Admin</Brand>
                <Nav>
                    {LINKS.map((link) => (
                        <NavLink key={link} href="#" $active={link === "Geofence Monitor"}>{link}</NavLink>
                    ))}
                </Nav>
                <EmergencyButton type="button">Emergency Mode: Active</EmergencyButton>
                <LogoutButton type="button">Log Out</LogoutButton>
            </Sidebar>
            <Main>
                <Title>Monitor Geofences</Title>
                <FieldLabel htmlFor="geofences">Select Geofences</FieldLabel>
                <GeofenceList id="geofences" multiple defaultValue={FENCES}>
                    {FENCES.map((fence) => <option key={fence}>{fence}</option>)}
                </GeofenceList>
                <LocationInput type="text" aria-label="Search for a location" placeholder="Search for a location..."/>
                <MapFrame>
                    <GeofenceMap/>
                    <MapTypes>
                        <MapTypeButton type="button" $active>Map</MapTypeButton>
                        <MapTypeButton type="button">Satellite</MapTypeButton>
                    </MapTypes>
                    <MapButton type="button" aria-label="Toggle fullscreen view" $top="15px"><FullscreenIcon/></MapButton>
                    <MapButton type="button" aria-label="Map camera controls" $bottom="144px" $round><PanIcon/></MapButton>
                    <MapButton type="button" aria-label="Open Street View" $bottom="36px"><PegmanIcon/></MapButton>
                    <GoogleLogo>
                        <Letter $color="#4a86ee">G</Letter>
                        <Letter $color="#e04a3c">o</Letter>
                        <Letter $color="#f2b82e">o</Letter>
                        <Letter $color="#4a86ee">g</Letter>
                        <Letter $color="#45a457">l</Letter>
                        <Letter $color="#e04a3c">e</Letter>
                    </GoogleLogo>
                    <Attribution>
                        <a href="#">Keyboard shortcuts</a>
                        <Copyright>Map data ©2025 Google</Copyright>
                        <a href="#">Terms</a>
                        <a href="#">Report a map error</a>
                    </Attribution>
                </MapFrame>
                <Toolbar>
                    <UserSearch type="text" aria-label="Search users" placeholder="Search users by name, email, or phone..."/>
                    <Picker $width={218}>
                        <PickerSelect aria-label="Role">
                            <option>All Roles</option>
                        </PickerSelect>
                        <ChevronDown size={18}/>
                    </Picker>
                    <Picker $width={180}>
                        <PickerSelect aria-label="Status">
                            <option>All Status</option>
                        </PickerSelect>
                        <ChevronDown size={18}/>
                    </Picker>
                    <RefreshButton type="button">Refresh Data</RefreshButton>
                </Toolbar>
                <Table>
                    <colgroup>
                        <Col $width="86px"/>
                        <Col/>
                        <Col $width="216px"/>
                        <Col $width="247px"/>
                        <Col $width="423px"/>
                        <Col $width="261px"/>
                        <Col $width="288px"/>
                    </colgroup>
                    <thead>
                        <tr>
                            <CheckCell as="th" $center><Checkbox type="checkbox" aria-label="Select all users"/></CheckCell>
                            <th>Name</th>
                            <th>Phone</th>
                            <th>Role</th>
                            <th>Coordinates</th>
                            <th>Trackable</th>
                            <th>Last Active</th>
                        </tr>
                    </thead>
                    <tbody>
                        {USERS.map((user) => (
                            <Row key={user.name} $alert={user.alert}>
                                <CheckCell $center><Checkbox type="checkbox" aria-label={`Select ${user.name}`}/></CheckCell>
                                <Cell>
                                    <Person>
                                        <div>{user.name}</div>
                                        {user.email && <div><Detail>{user.email}</Detail></div>}
                                    </Person>
                                </Cell>
                                <Cell>
                                    <div>{user.phone}</div>
                                    {user.ext && <div><Detail>Ext: {user.ext}</Detail></div>}
                                </Cell>
                                <Cell><Badge $role={user.role}>{user.role}</Badge></Cell>
                                <Cell>{user.coords}</Cell>
                                <Cell $center>{user.trackable}</Cell>
                                <Cell $muted>{user.active}</Cell>
                            </Row>
                        ))}
                    </tbody>
                </Table>
            </Main>
        </Shell>
    )
}

export default App;
